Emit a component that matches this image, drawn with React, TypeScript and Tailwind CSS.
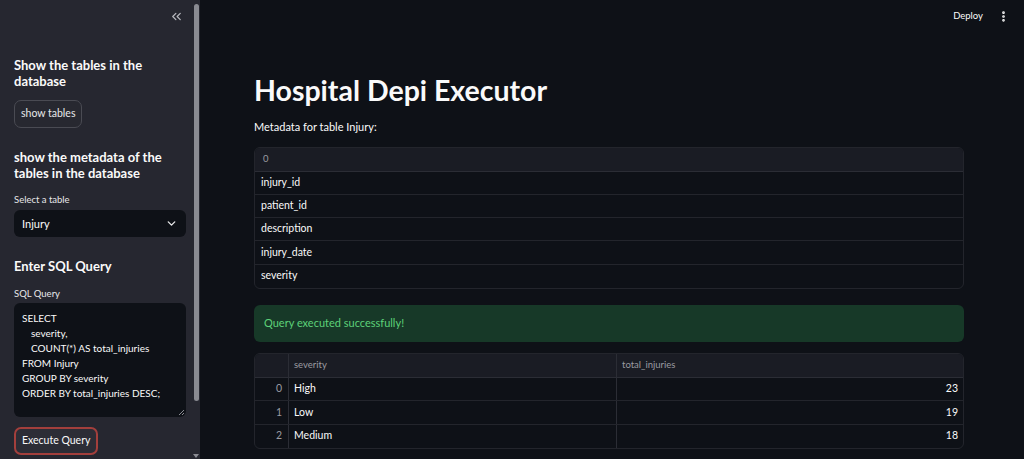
import { ChevronDown, ChevronsLeft, EllipsisVertical } from "lucide-react";

const font = { fontFamily: '"Lato", "Noto Sans", sans-serif' };

const metaRows = ["injury_id", "patient_id", "description", "injury_date", "severity"];

const results = [
  { idx: 0, severity: "High", total: 23 },
  { idx: 1, severity: "Low", total: 19 },
  { idx: 2, severity: "Medium", total: 18 },
];

const sqlLines = [
  { text: "SELECT", indent: false },
  { text: "severity,", indent: true },
  { text: "COUNT(*) AS total_injuries", indent: true },
  { text: "FROM Injury", indent: false },
  { text: "GROUP BY severity", indent: false },
  { text: "ORDER BY total_injuries DESC;", indent: false },
];

function Sidebar() {
  return (
    <aside className="relative w-[200px] shrink-0 h-full bg-[#262730] overflow-hidden">
      {/* scrollbar */}
      <div className="absolute right-[1px] top-[4px] w-[5px] h-[397px] rounded-full bg-[#8a8b92]" />
      <div className="absolute right-[1px] bottom-[1px] w-0 h-0 border-l-[3px] border-r-[3px] border-t-[4px] border-l-transparent border-r-transparent border-t-[#8a8b92]" />

      <div className="flex justify-end pt-[9px] pr-[16px]">
        <ChevronsLeft size={15} strokeWidth={2} className="text-[#b8b9bf]" />
      </div>

      <div className="px-[14px] pt-[33px]">
        <h3 className="text-[13px] font-bold leading-[16px] text-[#fafafa] w-[150px]">
          Show the tables in the database
        </h3>
        <button className="mt-[11px] h-[28px] px-[6px] rounded-[7px] border border-[#4a4b53] bg-[#272830] text-[10.5px] text-[#e8e8ea]">
          show tables
        </button>

        <h3 className="mt-[21px] text-[13px] font-bold leading-[16px] text-[#fafafa] w-[160px]">
          show the metadata of the tables in the database
        </h3>
        <div className="mt-[12px] text-[9.5px] text-[#e8e8ea]">Select a table</div>
        <div className="mt-[3px] h-[27px] rounded-[6px] bg-[#0e1117] flex items-center justify-between pl-[8px] pr-[8px]">
          <span className="text-[11px] text-[#fafafa]">Injury</span>
          <ChevronDown size={13} strokeWidth={2.5} className="text-[#e8e8ea]" />
        </div>

        <h3 className="mt-[21px] text-[13px] font-bold leading-[16px] text-[#fafafa]">
          Enter SQL Query
        </h3>
        <div className="mt-[13px] text-[9.5px] text-[#e8e8ea]">SQL Query</div>
        <div className="relative mt-[1px] h-[114px] rounded-[6px] bg-[#0e1117] pl-[8px] pt-[8px]">
          {sqlLines.map((l, i) => (
            <div
              key={i}
              className={`text-[10px] leading-[15px] text-[#fafafa] whitespace-pre ${l.indent ? "pl-[9px]" : ""}`}
            >
              {l.text}
            </div>
          ))}
          <svg className="absolute right-[2px] bottom-[2px]" width="5" height="5" viewBox="0 0 5 5">
            <line x1="0" y1="5" x2="5" y2="0" stroke="#8a8b92" strokeWidth="1" />
            <line x1="3" y1="5" x2="5" y2="3" stroke="#8a8b92" strokeWidth="1" />
          </svg>
        </div>
        <button className="mt-[10px] h-[28px] px-[6px] rounded-[7px] border-2 border-[#a33f3c] bg-[#2c2d36] text-[10.5px] text-[#fafafa]">
          Execute Query
        </button>
      </div>
    </aside>
  );
}

function Main() {
  return (
    <main className="flex-1 h-full bg-[#0e1117] overflow-hidden">
      <header className="flex justify-end items-center h-[33px] pr-[14px] gap-[14px]">
        <span className="text-[9.5px] text-[#fafafa]">Deploy</span>
        <EllipsisVertical size={13} strokeWidth={3} className="text-[#fafafa]" />
      </header>

      <div className="ml-[54px] w-[710px] pt-[37px]">
        <h1 className="text-[28.5px] font-bold leading-[40px] text-[#fafafa]">
          Hospital Depi Executor
        </h1>
        <p className="mt-[9px] text-[11px] text-[#fafafa]">Metadata for table Injury:</p>

        <div className="mt-[11px] rounded-[6px] border border-[#23252c] overflow-hidden">
          <div className="h-[24px] bg-[#1a1c24] border-b border-[#2b2d35] flex items-center pl-[8px] text-[9.5px] text-[#9a9ba1]">
            0
          </div>
          {metaRows.map((r, i) => (
            <div
              key={r}
              className={`h-[23.3px] flex items-center pl-[6px] text-[10.5px] text-[#fafafa] ${
                i < metaRows.length - 1 ? "border-b border-[#23252c]" : ""
              }`}
            >
              {r}
            </div>
          ))}
        </div>

        <div className="mt-[16px] h-[37px] rounded-[6px] bg-[#173928] flex items-center pl-[10px] text-[11px] text-[#5dd178]">
          Query executed successfully!
        </div>

        <div className="mt-[11px] rounded-[6px] border border-[#23252c] overflow-hidden">
          <div className="grid grid-cols-[34px_328px_1fr] h-[24px] bg-[#1a1c24] border-b border-[#2b2d35] text-[9.5px] text-[#9a9ba1]">
            <div className="border-r border-[#2b2d35]" />
            <div className="border-r border-[#2b2d35] flex items-center pl-[5px]">severity</div>
            <div className="flex items-center pl-[5px]">total_injuries</div>
          </div>
          {results.map((r, i) => (
            <div
              key={r.idx}
              className={`grid grid-cols-[34px_328px_1fr] h-[23.3px] text-[10.5px] ${
                i < results.length - 1 ? "border-b border-[#23252c]" : ""
              }`}
            >
              <div className="border-r border-[#2b2d35] flex items-center justify-end pr-[6px] text-[#9a9ba1]">
                {r.idx}
              </div>
              <div className="border-r border-[#2b2d35] flex items-center pl-[5px] text-[#fafafa]">
                {r.severity}
              </div>
              <div className="flex items-center justify-end pr-[5px] text-[#fafafa]">{r.total}</div>
            </div>
          ))}
        </div>
      </div>
    </main>
  );
}

export default function App() {
  return (
    <div className="flex w-[1024px] h-[459px] overflow-hidden" style={font}>
      <Sidebar />
      <Main />
    </div>
  );
}
